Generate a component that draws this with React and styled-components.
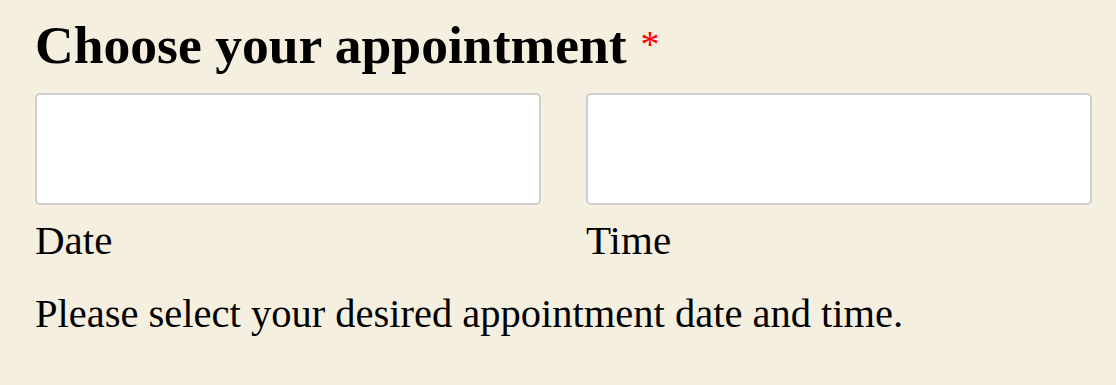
import React from "react";
import styled, { createGlobalStyle } from "styled-components";

const GlobalStyle = createGlobalStyle`
  html, body {
    margin: 0;
    padding: 0;
    background: #f5efe0;
  }
  body {
    font-family: "Liberation Serif", "Times New Roman", serif;
    color: #000;
  }
`;

const Group = styled.div`
  padding: 15px 23px 0 35px;
`;

const Heading = styled.div`
  font-size: 53.6px;
  font-weight: 700;
  line-height: 58px;
`;

const Required = styled.span`
  color: #f00;
  font-weight: 400;
  font-size: 38px;
  margin-left: 14px;
  vertical-align: 6px;
`;

const Row = styled.div`
  display: grid;
  grid-template-columns: 506px 506px;
  column-gap: 45px;
  margin-top: 19px;
`;

const Column = styled.div`
  display: flex;
  flex-direction: column;
`;

const Input = styled.input`
  box-sizing: border-box;
  width: 100%;
  height: 112px;
  margin: 0;
  background: #fff;
  border: 2px solid #cfcfcf;
  border-radius: 5px;
  font: inherit;
  font-size: 32px;
  padding: 0 16px;
  outline: none;
`;

const Sublabel = styled.label`
  font-size: 41px;
  line-height: 48px;
  margin-top: 11px;
`;

const Description = styled.p`
  margin: 26px 0 0;
  font-size: 40.5px;
  line-height: 48px;
`;

export default function App() {
  return (
    <>
      <GlobalStyle />
      <Group role="group" aria-labelledby="appt-heading">
        <Heading id="appt-heading">
          Choose your appointment<Required>*</Required>
        </Heading>
        <Row>
          <Column>
            <Input id="appt-date" type="text" aria-label="Date" />
            <Sublabel htmlFor="appt-date">Date</Sublabel>
          </Column>
          <Column>
            <Input id="appt-time" type="text" aria-label="Time" />
            <Sublabel htmlFor="appt-time">Time</Sublabel>
          </Column>
        </Row>
        <Description>Please select your desired appointment date and time.</Description>
      </Group>
    </>
  );
}
